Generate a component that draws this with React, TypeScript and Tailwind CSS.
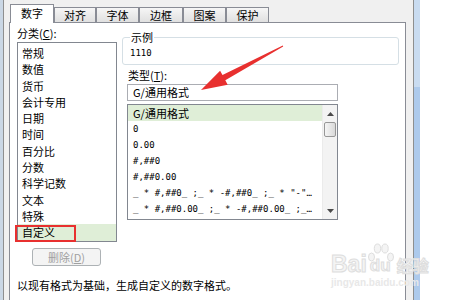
import React from "react";

const CATEGORIES = [
  "常规", "数值", "货币", "会计专用", "日期", "时间",
  "百分比", "分数", "科学记数", "文本", "特殊", "自定义",
];

const FORMATS = [
  "0",
  "0.00",
  "#,##0",
  "#,##0.00",
  '_ * #,##0_ ;_ * -#,##0_ ;_ * "-"…',
  "_ * #,##0.00_ ;_ * -#,##0.00_ ;_…",
];

const TABS = [
  { label: "数字", width: "w-[44px]", active: true },
  { label: "对齐", width: "w-[42px]", active: false },
  { label: "字体", width: "w-[43px]", active: false },
  { label: "边框", width: "w-[44px]", active: false },
  { label: "图案", width: "w-[43px]", active: false },
  { label: "保护", width: "w-[43px]", active: false },
];

function Triangle({ up }: { up: boolean }) {
  return (
    <svg width="7" height="4" viewBox="0 0 7 4">
      <path d={up ? "M0 4 L3.5 0 L7 4 Z" : "M0 0 L7 0 L3.5 4 Z"} fill="#4a4a4a" />
    </svg>
  );
}

function Scrollbar() {
  return (
    <div className="w-[15px] flex flex-col bg-[#f3f3f3] border-l border-[#ebebeb]">
      <div className="h-[17px] flex items-center justify-center">
        <Triangle up />
      </div>
      <div className="h-[15px] mx-[1px] rounded-[2px] border border-[#979797] bg-linear-to-r from-[#f5f5f5] to-[#d9d9d9]" />
      <div className="flex-1" />
      <div className="h-[17px] flex items-center justify-center">
        <Triangle up={false} />
      </div>
    </div>
  );
}

function Watermark() {
  return (
    <div className="absolute left-[331px] top-[243px] pointer-events-none select-none font-['Liberation_Sans',sans-serif]">
      <div className="flex items-end">
        <span className="text-[23px] font-bold leading-[22px] text-[#f4f4f4] [-webkit-text-stroke:1px_#dedede]">
          Bai
        </span>
        <div className="relative w-[28px] h-[32px]">
          <svg width="28" height="22" viewBox="0 0 28 22" className="absolute top-0 left-0">
            <g fill="#f4f4f4" stroke="#dedede" strokeWidth="1">
              <ellipse cx="4.5" cy="14" rx="3" ry="4" />
              <ellipse cx="10.5" cy="5.5" rx="3.2" ry="4.5" />
              <ellipse cx="18" cy="5.5" rx="3.2" ry="4.5" />
              <ellipse cx="23.5" cy="14" rx="3" ry="4" />
            </g>
          </svg>
          <span className="absolute left-[3px] bottom-0 text-[17px] font-bold leading-[18px] text-[#f4f4f4] [-webkit-text-stroke:1px_#dedede]">
            du
          </span>
        </div>
        <span className="ml-[2px] text-[16px] font-bold leading-[20px] text-[#f4f4f4] [-webkit-text-stroke:1px_#dedede] font-['Noto_Sans_CJK_SC',sans-serif]">
          经验
        </span>
      </div>
      <div className="mt-[2px] text-[10px] font-bold leading-[11px] text-[#e8e8e8]">
        jingyan.baidu.com
      </div>
    </div>
  );
}

function RedArrow() {
  return (
    <svg
      className="absolute left-0 top-0 pointer-events-none"
      width="450"
      height="300"
      viewBox="0 0 450 300"
    >
      <polygon
        points="201,90 227.7,84.7 225.3,80.3 283.2,46.4 282.8,45.6 222.5,75.1 220.1,70.7"
        fill="#e8302f"
      />
    </svg>
  );
}

export default function App() {
  return (
    <div className="relative w-[450px] h-[300px] overflow-hidden flex bg-white text-black font-['Noto_Sans_CJK_SC',sans-serif]">
      {/* window frame left */}
      <div className="w-[3px] bg-[#cad7e5]" />

      {/* dialog */}
      <div className="w-[411px] flex flex-col bg-[#f0f0f0] border-l border-r border-[#8e8f8f] pl-[5px] pr-[7px]">
        {/* tabs */}
        <div className="h-[22px] flex items-end pl-[1px]">
          {TABS.map((t) =>
            t.active ? (
              <div
                key={t.label}
                className={`${t.width} h-[19px] -mb-px relative z-10 bg-white border border-b-0 border-[#898c95] text-[11px] leading-[17px] text-center`}
              >
                {t.label}
              </div>
            ) : (
              <div
                key={t.label}
                className={`${t.width} h-[15px] border border-b-0 border-[#898c95] bg-linear-to-b from-[#f6f6f6] to-[#e0e0e0] text-[11px] leading-[15px] text-center`}
              >
                {t.label}
              </div>
            )
          )}
        </div>

        {/* tab page */}
        <div className="flex-1 bg-white border-t border-l border-r border-[#898c95]">
          <div className="flex pl-[7px]">
            {/* 分类 */}
            <div className="w-[100px] pt-[2px]">
              <div className="h-[16px] text-[11px] leading-[16px]">
                分类(<span className="underline">C</span>):
              </div>
              <div className="mt-[1px] h-[200px] border border-[#828790] pt-[2px]">
                {CATEGORIES.map((c, i) => {
                  const selected = i === CATEGORIES.length - 1;
                  return (
                    <div
                      key={c}
                      className={`relative h-[16.3px] pl-[4px] text-[11px] leading-[16.3px] ${
                        selected ? "bg-[#dfeed7]" : ""
                      }`}
                    >
                      {c}
                      {selected && (
                        <div className="absolute left-[-3px] top-[1px] w-[61px] h-[17px] border-2 border-[#e8302f]" />
                      )}
                    </div>
                  );
                })}
              </div>
              <div className="mt-[6px] ml-[15px] w-[69px] h-[18px] rounded-[3px] border border-[#adb2b5] bg-[#f4f4f4] text-[11px] leading-[16px] text-center text-[#a0a0a0]">
                删除(<span className="underline">D</span>)
              </div>
            </div>

            {/* 示例 + 类型 */}
            <div className="ml-[5px] w-[277px] pt-[6px]">
              <fieldset className="border border-[#d5dfe5] rounded-[3px] px-[7px] pb-[3px]">
                <legend className="px-[1px] text-[11px] leading-[16px]">示例</legend>
                <div className="h-[16px] text-[9px] leading-[16px] font-['DejaVu_Sans_Mono',monospace]">
                  1110
                </div>
              </fieldset>

              <div className="mt-[2px] ml-[6px] h-[16px] text-[11px] leading-[16px]">
                类型(<span className="underline">T</span>):
              </div>
              <div className="mt-[1px] ml-[5px] w-[211px] h-[17px] border border-[#abadb3] pl-[5px] text-[11px] leading-[15px]">
                G/通用格式
              </div>
              <div className="mt-[3px] ml-[5px] w-[211px] h-[116px] border border-[#828790] flex">
                <div className="flex-1 min-w-0">
                  <div className="h-[16px] pl-[5px] bg-[#dfeed7] text-[11px] leading-[16px]">
                    G/通用格式
                  </div>
                  {FORMATS.map((f) => (
                    <div
                      key={f}
                      className="h-[16px] pl-[5px] whitespace-pre overflow-hidden text-[9px] leading-[16px] font-['DejaVu_Sans_Mono',monospace]"
                    >
                      {f}
                    </div>
                  ))}
                </div>
                <Scrollbar />
              </div>
            </div>
          </div>

          <div className="mt-[11px] pl-[7px] text-[11px] leading-[16px]">
            以现有格式为基础，生成自定义的数字格式。
          </div>
        </div>
      </div>

      {/* window frame right */}
      <div className="w-[6px] flex flex-col">
        <div className="h-[87px] bg-[#c9dcf1]" />
        <div className="flex-1 bg-[#adcaec]" />
      </div>
      <div className="flex-1 bg-white" />

      <RedArrow />
      <Watermark />
    </div>
  );
}
